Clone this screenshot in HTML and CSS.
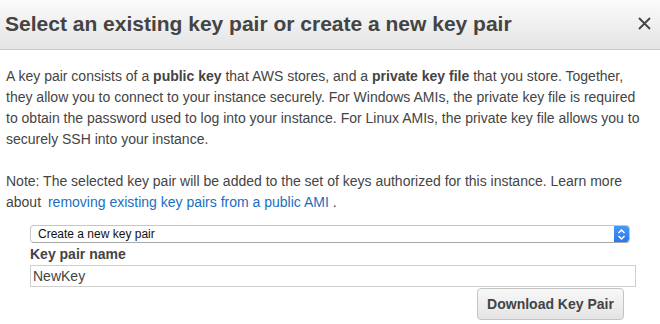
FILE: index.html
```html
<!DOCTYPE html>
<html>
<head>
<meta charset="utf-8">
<link rel="stylesheet" href="styles.css">
</head>
<body>
<div class="dialog">
  <div class="header">
    <h1 class="title">Select an existing key pair or create a new key pair</h1>
    <span class="close">
      <svg width="13" height="13" viewBox="0 0 13 13"><path d="M1 1 L12 12 M12 1 L1 12" stroke="#444" stroke-width="1.8" fill="none"/></svg>
    </span>
  </div>
  <div class="body">
    <p class="para">A key pair consists of a <b>public key</b> that AWS stores, and a <b>private key file</b> that you store. Together, they allow you to connect to your instance securely. For Windows AMIs, the private key file is required to obtain the password used to log into your instance. For Linux AMIs, the private key file allows you to securely SSH into your instance.</p>
    <p class="para note">Note: The selected key pair will be added to the set of keys authorized for this instance. Learn more about <a class="link" href="#">removing existing key pairs from a public AMI</a> .</p>
    <div class="form">
      <div class="select">
        <span class="select-text">Create a new key pair</span>
        <span class="stepper">
          <svg width="15" height="17" viewBox="0 0 15 17"><path d="M4.5 7 L7.5 4 L10.5 7 M4.5 10 L7.5 13 L10.5 10" stroke="#fff" stroke-width="1.5" fill="none"/></svg>
        </span>
      </div>
      <label class="label">Key pair name</label>
      <div class="input">NewKey</div>
      <div class="actions">
        <button class="btn">Download Key Pair</button>
      </div>
    </div>
  </div>
</div>
</body>
</html>
```
FILE: styles.css
```css
* { box-sizing: border-box; }
body {
  margin: 0;
  font-family: "Liberation Sans", Arial, sans-serif;
  color: #444;
  background: #fff;
}
.header {
  height: 50px;
  display: flex;
  align-items: center;
  justify-content: space-between;
  padding: 0 9px 0 5px;
  background: linear-gradient(#fbfbfb, #e4e4e4);
  border-bottom: 1px solid #c9c9c9;
}
.title {
  margin: 0;
  font-size: 21px;
  font-weight: bold;
  color: #444;
  padding-bottom: 2px;
}
.close {
  display: flex;
  width: 13px;
  height: 13px;
  margin-bottom: 2px;
}
.body {
  padding: 16px 0 0 6px;
}
.para {
  margin: 0 14px 21px 0;
  font-size: 14px;
  line-height: 21px;
}
.note { margin-bottom: 12px; }
.link {
  color: #1a6fc0;
  text-decoration: none;
  margin-left: 3px;
}
.form {
  padding-left: 24px;
  padding-right: 24px;
}
.select {
  width: 600px;
  height: 18px;
  display: flex;
  align-items: center;
  border: 1px solid #c6c6c6;
  border-bottom-color: #aaa;
  border-radius: 4px;
  background: #fff;
  overflow: hidden;
}
.select-text {
  flex: 1;
  font-size: 12px;
  color: #111;
  padding-left: 7px;
}
.stepper {
  width: 15px;
  height: 18px;
  margin-top: -1px;
  margin-bottom: -1px;
  display: flex;
  align-items: center;
  justify-content: center;
  background: linear-gradient(#4a9af8, #2476f0);
  border-radius: 0 4px 4px 0;
}
.label {
  display: block;
  font-size: 14px;
  font-weight: bold;
  line-height: 21px;
  margin-top: 1px;
}
.input {
  height: 22px;
  border: 1px solid #cfcfcf;
  font-size: 14px;
  line-height: 20px;
  padding-left: 2px;
  color: #444;
}
.actions {
  display: flex;
  justify-content: flex-end;
  padding-right: 12px;
  margin-top: 1px;
}
.btn {
  height: 32px;
  width: 147px;
  padding: 0;
  font-family: "Liberation Sans", Arial, sans-serif;
  font-size: 14px;
  font-weight: bold;
  color: #444;
  background: linear-gradient(#f8f8f8, #e4e4e4);
  border: 1px solid #c4c4c4;
  border-radius: 4px;
}
```
